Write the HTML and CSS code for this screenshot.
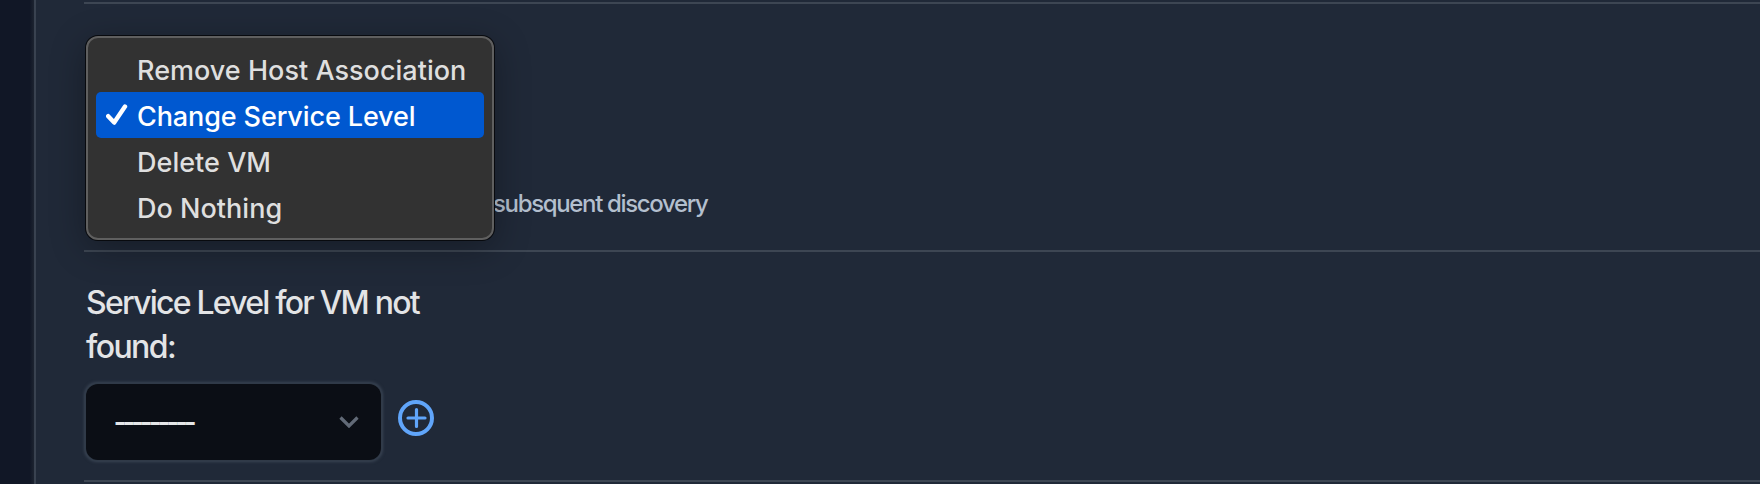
FILE: index.html
```
<!DOCTYPE html>
<html lang="en">
<head>
<meta charset="utf-8">
<title>Settings</title>
<link rel="stylesheet" href="styles.css">
</head>
<body>
<div class="app">
  <aside class="rail"></aside>
  <main class="content">
    <section class="row row-action">
      <p class="help">subsquent discovery</p>
      <ul class="menu">
        <li class="option"><span class="mark"></span><span class="text">Remove Host Association</span></li>
        <li class="option selected"><span class="mark"><svg width="22" height="22" viewBox="0 0 22 22"><path d="M2.2 12.2 8.2 18.6 19 2.6"/></svg></span><span class="text tight">Change Service Level</span></li>
        <li class="option"><span class="mark"></span><span class="text">Delete VM</span></li>
        <li class="option"><span class="mark"></span><span class="text">Do Nothing</span></li>
      </ul>
    </section>
    <section class="row row-level">
      <label class="label">Service Level for VM not<br><span class="label-end">found:</span></label>
      <div class="field">
        <div class="select"><span class="dashes">---------</span><svg class="chevron" width="20" height="12" viewBox="0 0 20 12"><path d="M1.5 1.500 10 10 18.5 1.500"/></svg></div>
        <svg class="add" width="36" height="36" viewBox="0 0 36 36"><circle cx="18" cy="18" r="16"/><path d="M10 18H27M18.5 9.5V26.500"/></svg>
      </div>
    </section>
  </main>
</div>
</body>
</html>
```
FILE: styles.css
```
* { box-sizing: border-box; }
body { margin: 0; background: #202938; font-family: Inter, "Liberation Sans", sans-serif; }
.app { display: flex; width: 1760px; height: 484px; overflow: hidden; }
.rail { width: 36px; background: linear-gradient(90deg, #111726 0 30px, #1d2431 34px); border-right: 2px solid #394250; }
.content { flex: 1; padding: 2px 0 0 48px; }
.row { position: relative; border-top: 2px solid #3d4653; }
.row-action { height: 248px; padding: 184px 0 0 409px; }
.help { margin: 0; font-size: 24px; font-weight: 500; line-height: 32px; letter-spacing: -1.35px; color: #b3bfce; white-space: nowrap; }
.menu {
  position: absolute; left: 2px; top: 32px; width: 408px; height: 204px;
  margin: 0; padding: 8px; list-style: none;
  background: #323232; border: 2px solid #5f5f5f; border-radius: 12px;
  box-shadow: 0 0 0 1px #080a0e, 0 8px 36px rgba(0, 0, 0, .32);
  z-index: 1;
}
.option { display: flex; align-items: center; height: 46px; padding-left: 10px; border-radius: 5px; font-size: 27px; font-weight: 500; color: #dfdfdf; white-space: nowrap; }
.text { padding-top: 2px; letter-spacing: 0.02px; }
.tight { letter-spacing: -0.12px; }
.selected { background: #0058d0; color: #fff; }
.mark { display: flex; width: 31px; }
.mark path { fill: none; stroke: #fff; stroke-width: 4.4; stroke-linecap: round; stroke-linejoin: round; }
.row-level { height: 230px; padding: 29px 0 0 1px; }
.content::after { content: ""; display: block; height: 2px; background: #3d4653; }
.label { display: block; height: 88px; padding-left: 1px; font-size: 32px; font-weight: 500; line-height: 44px; letter-spacing: -1.77px; color: #e3e4e6; }
.label-end { letter-spacing: -1.6px; }
.field { display: flex; align-items: flex-start; margin: 15px 0 0 1px; }
.select {
  display: flex; align-items: center; justify-content: space-between;
  width: 295px; height: 76px; padding: 0 22px 0 28px;
  background: #0b0e15; border-radius: 12px;
  box-shadow: 0 0 0 1px #303a48, 0 0 3px 1.5px #3a4554;
}
.dashes { padding-bottom: 2px; font: 36px/40px "Liberation Sans", sans-serif; letter-spacing: -3.2px; color: #e5e6e8; }
.chevron path { fill: none; stroke: #626a77; stroke-width: 3.2; }
.add { margin: 16px 0 0 17px; }
.add circle { fill: none; stroke: #60a5fa; stroke-width: 4; }
.add path { stroke: #60a5fa; stroke-width: 3.2; stroke-linecap: round; }
```
